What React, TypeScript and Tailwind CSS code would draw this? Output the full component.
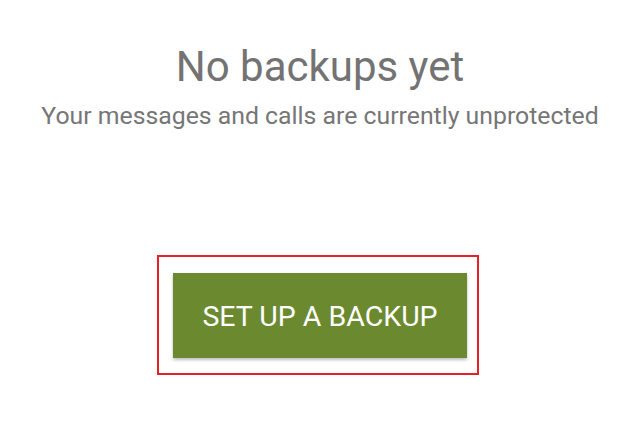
import React from 'react';

const App: React.FC = () => {
  return (
    <div className="flex h-[431px] w-[640px] flex-col items-center bg-white font-['Roboto',sans-serif]">
      <h1 className="mt-[43px] text-[42px] leading-[48px] text-[#737373]">No backups yet</h1>
      <p className="mt-[10px] text-[24.8px] leading-[30px] text-[#767676]">
        Your messages and calls are currently unprotected
      </p>
      <div className="mt-[124px] ml-[-4px] border-2 border-[#e8202a] pt-4 pl-[14px] pr-[10px] pb-[15px]">
        <button className="flex h-[85px] w-[294px] items-center justify-center bg-[#6b8a30] pt-[3px] text-[28.5px] text-white shadow-[0_2px_3px_rgba(0,0,0,0.25)]">
          SET UP A BACKUP
        </button>
      </div>
    </div>
  );
};

export default App;
